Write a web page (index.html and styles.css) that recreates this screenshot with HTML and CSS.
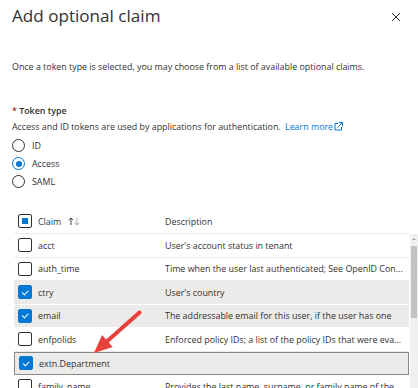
FILE: index.html
```html
<!DOCTYPE html>
<html lang="en">
<head>
    <meta charset="UTF-8">
    <meta name="viewport" content="width=device-width, initial-scale=1.0">
    <link rel="stylesheet" href="styles.css">
    <title>Add optional claim</title>
</head>
<body>
    <div class="panel">
        <div class="panel-header">
            <h1>Add optional claim</h1>
            <svg class="close-btn" width="10" height="10" viewBox="0 0 10 10">
                <path d="M1 1 L9 9 M9 1 L1 9" stroke="#323130" stroke-width="1"/>
            </svg>
        </div>

        <p class="intro">Once a token type is selected, you may choose from a list of available optional claims.</p>

        <div class="field">
            <div class="field-label"><span class="required">*</span> Token type</div>
            <div class="field-help">
                Access and ID tokens are used by applications for authentication.
                <a class="link" href="#">Learn more<svg width="9" height="9" viewBox="0 0 9 9">
                    <path d="M4 1.5 H1 V8 H7.5 V5" fill="none" stroke="#0078d4" stroke-width="1"/>
                    <path d="M5 0.5 H8.5 V4 M8.5 0.5 L3.5 5.5" fill="none" stroke="#0078d4" stroke-width="1"/>
                </svg></a>
            </div>
            <div class="radio-group">
                <label class="radio"><span class="radio-dot"></span>ID</label>
                <label class="radio checked"><span class="radio-dot"></span>Access</label>
                <label class="radio"><span class="radio-dot"></span>SAML</label>
            </div>
        </div>

        <div class="claims">
            <div class="claims-list">
                <div class="claims-head">
                    <div class="cell-check"><span class="checkbox partial"></span></div>
                    <div class="cell-claim">Claim
                        <svg class="sort-icon" width="12" height="9" viewBox="0 0 12 9">
                            <path d="M3 8 V1 M0.8 3.2 L3 1 L5.2 3.2" fill="none" stroke="#323130" stroke-width="0.9"/>
                            <path d="M9 1 V8 M6.8 5.8 L9 8 L11.2 5.8" fill="none" stroke="#a19f9d" stroke-width="0.9"/>
                        </svg>
                    </div>
                    <div class="cell-desc">Description</div>
                </div>
                <div id="claim-rows"></div>
            </div>
            <div class="scrollbar">
                <div class="scroll-up"></div>
                <div class="scroll-thumb"></div>
            </div>
        </div>
    </div>

    <svg class="callout-arrow" width="418" height="388" viewBox="0 0 418 388">
        <polygon points="94,353 112.7,347 108.7,342.5 140.8,313.9 138.2,310.9 106.1,339.5 102.1,335" fill="#e8403a"/>
        <circle cx="139.5" cy="312.4" r="2" fill="#e8403a"/>
    </svg>

    <script>
        // Optional claims available for the Access token
        const claims = [
            { name: "acct", desc: "User's account status in tenant", checked: false },
            { name: "auth_time", desc: "Time when the user last authenticated; See OpenID Con...", checked: false },
            { name: "ctry", desc: "User's country", checked: true },
            { name: "email", desc: "The addressable email for this user, if the user has one", checked: true },
            { name: "enfpolids", desc: "Enforced policy IDs; a list of the policy IDs that were eva...", checked: false },
            { name: "extn.Department", desc: "", checked: true, focused: true },
            { name: "family_name", desc: "Provides the last name, surname, or family name of the", checked: false },
        ];

        const list = document.getElementById("claim-rows");
        claims.forEach((claim) => {
            const row = document.createElement("div");
            row.className = "claim-row";
            if (claim.checked) row.classList.add("selected");
            if (claim.focused) row.classList.add("focused");
            row.innerHTML = `
                <div class="cell-check"><span class="checkbox ${claim.checked ? "checked" : ""}"></span></div>
                <div class="cell-claim">${claim.name}</div>
                <div class="cell-desc">${claim.desc}</div>
            `;
            list.appendChild(row);
        });
    </script>
</body>
</html>
```

FILE: styles.css
```css
body {
    margin: 0;
    background: #fff;
    color: #323130;
    font-family: "Open Sans", "Noto Sans", sans-serif;
    font-size: 8.9px;
    overflow: hidden;
}

.panel {
    padding: 3px 0 0 12px;
}

.panel-header {
    display: flex;
    align-items: center;
    justify-content: space-between;
    padding-right: 17px;
}

.panel-header h1 {
    margin: 0;
    font-size: 17.1px;
    font-weight: 400;
    line-height: 26px;
}

.close-btn {
    margin-top: 2px;
}

.intro {
    margin: 32px 0 0;
    line-height: 12px;
}

.field {
    margin-top: 31px;
}

.field-label {
    font-weight: 600;
    line-height: 14px;
}

.required {
    color: #a4262c;
}

.field-help {
    margin-top: 2px;
    line-height: 13px;
}

.link {
    color: #0078d4;
    text-decoration: none;
    margin-left: 2px;
}

.link svg {
    margin-left: 1px;
    vertical-align: -1px;
}

.radio-group {
    display: flex;
    flex-direction: column;
    gap: 5px;
    margin-top: 6px;
}

.radio {
    display: flex;
    align-items: center;
    gap: 7px;
    height: 13px;
}

.radio-dot {
    width: 11px;
    height: 11px;
    border: 1px solid #323130;
    border-radius: 50%;
    display: flex;
    align-items: center;
    justify-content: center;
}

.radio.checked .radio-dot {
    border-color: #0078d4;
}

.radio.checked .radio-dot::after {
    content: "";
    width: 6px;
    height: 6px;
    border-radius: 50%;
    background: #0078d4;
}

.claims {
    display: flex;
    margin-top: 21px;
    margin-left: 2px;
}

.claims-list {
    flex: 1;
}

.claims-head,
.claim-row {
    display: grid;
    grid-template-columns: 24px 127px 1fr;
    align-items: center;
    box-sizing: border-box;
}

.claims-head {
    height: 25px;
    border-bottom: 1px solid #edebe9;
}

.claims-head .cell-claim {
    display: flex;
    align-items: center;
    gap: 7px;
}

.claim-row {
    height: 23.5px;
    border-bottom: 1px solid #edebe9;
    white-space: nowrap;
    overflow: hidden;
}

.claim-row.selected {
    background: #edebe9;
    border-bottom-color: #fff;
}

.claim-row.focused {
    border: 1px solid #8a8886;
}

.cell-check {
    padding-left: 4px;
    display: flex;
}

.checkbox {
    width: 12px;
    height: 12px;
    border: 1px solid #323130;
    border-radius: 2px;
    display: flex;
    align-items: center;
    justify-content: center;
}

.checkbox.partial::after {
    content: "";
    width: 6px;
    height: 6px;
    background: #0078d4;
}

.checkbox.checked {
    background: #0078d4;
    border-color: #0078d4;
}

.checkbox.checked::after {
    content: "";
    width: 5px;
    height: 2.5px;
    border-left: 1px solid #fff;
    border-bottom: 1px solid #fff;
    transform: translateY(-1px) rotate(-45deg);
}

.cell-desc {
    overflow: hidden;
}

.scrollbar {
    width: 8px;
    margin-top: 25px;
    margin-left: 1px;
    background: #f0f0f0;
    display: flex;
    flex-direction: column;
    align-items: center;
}

.scroll-up {
    margin-top: 4px;
    width: 0;
    height: 0;
    border-left: 2px solid transparent;
    border-right: 2px solid transparent;
    border-bottom: 2px solid #a0a0a0;
}

.scroll-thumb {
    margin-top: 6px;
    width: 6px;
    height: 72px;
    background: #c2c2c2;
}

.callout-arrow {
    position: absolute;
    left: 0;
    top: 0;
    pointer-events: none;
}
```
